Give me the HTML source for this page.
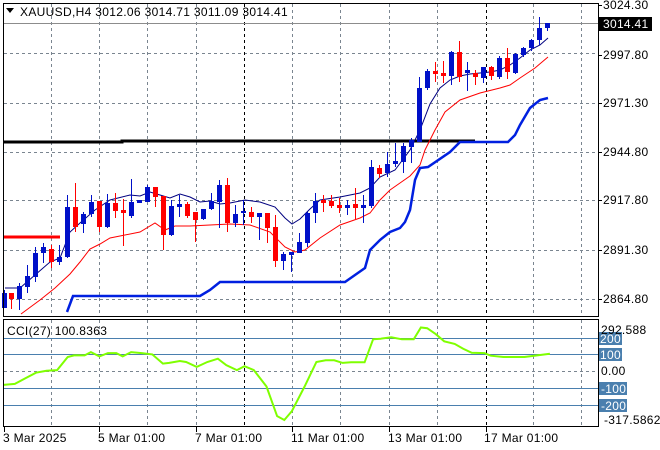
<!DOCTYPE html>
<html><head><meta charset="utf-8"><style>
html,body{margin:0;padding:0;background:#fff;width:660px;height:450px;overflow:hidden}
svg{display:block;font-family:"Liberation Sans",sans-serif;font-size:12px;letter-spacing:0.3px}
</style></head><body>
<svg width="660" height="450" viewBox="0 0 660 450" xmlns="http://www.w3.org/2000/svg">
<rect width="660" height="450" fill="#fff"/>
<g stroke="#7a8590" stroke-width="1" stroke-dasharray="3,3" fill="none">
<path d="M51.5 4V316M99.5 4V316M147.5 4V316M196.5 4V316M292.5 4V316M340.5 4V316M389.5 4V316M437.5 4V316M533.5 4V316M581.5 4V316"/>
<path d="M4 53.5H598M4 103.5H598M4 152.5H598M4 200.5H598M4 250.5H598M4 299.5H598"/>
<path d="M51.5 320V426M99.5 320V426M147.5 320V426M196.5 320V426M292.5 320V426M340.5 320V426M389.5 320V426M437.5 320V426M533.5 320V426M581.5 320V426M4 371.5H598"/>
</g>
<g stroke="#000" stroke-dasharray="3,3"><path d="M244.5 4V316M486.5 4V316M244.5 320V426M486.5 320V426"/></g>
<path d="M4 23.5H598" stroke="#8c8c8c"/>
<g stroke="#4a7fae"><path d="M4 338.5H598M4 354.5H598M4 388.5H598M4 405.5H598"/></g>
<path d="M3 142H122V141H475" stroke="#000" stroke-width="3" fill="none"/>
<path d="M3 237H60" stroke="#f00" stroke-width="3"/>
<polyline fill="none" stroke="#0020e0" stroke-width="2.5" points="67,312 73,296 100,296 200,296 210,290 220,282 345,282 355,275 365,268 370,250 380,240 390,232 400,228 405,222 410,210 415,180 420,168 428,167 450,152 460,142 508,142 515,135 520,125 530,108 540,100 548,98"/>
<polyline fill="none" stroke="#f00" stroke-width="1" points="21,314 40,300 55,288 70,274 80,262 90,249 100,244 110,238 120,236 140,232 155,223 165,230 175,226 190,226 210,225 230,224 250,225 270,232 285,247 295,252 305,250 320,238 340,225 360,218 370,213 380,200 390,190 400,183 410,176 420,165 425,150 435,130 445,112 460,100 480,93 500,88 510,85 520,78 535,68 548,57"/>
<polyline fill="none" stroke="#000080" stroke-width="1" points="5,288 20,288 35,275 50,262 60,258 70,232 80,223 95,210 110,200 130,195 140,196 150,192 160,195 170,198 180,194 190,197 200,202 210,201 220,204 230,203 245,200 260,202 275,207 285,218 292,224 300,219 310,209 320,200 340,197 360,193 370,188 380,177 395,170 410,150 420,130 430,104 440,88 450,80 460,76 470,74 480,73 490,72 500,70 510,65 520,58 530,50 540,45 548,38"/>
<g stroke="#0010c8" fill="none">
<path stroke-width="1" d="M4.5 290V308M19.5 283V310M27.5 265V293M35.5 247V282M43.5 243V263M59.5 245V265M67.5 195V258M83.5 212V233M91.5 195V217M107.5 194V228M131.5 179V218M139.5 200V203M147.5 185V202M171.5 200V236M179.5 195V217M203.5 209V220M211.5 193V210M219.5 180V228M235.5 205V227M243.5 200V225M259.5 213V240M283.5 252V270M291.5 252V272M299.5 233V253M307.5 212V247M315.5 193V223M347.5 200V215M363.5 195V223M371.5 160V208M387.5 152V177M395.5 143V167M403.5 143V173M411.5 138V163M419.5 77V142M427.5 69V90M451.5 51V85M467.5 62V91M483.5 67V83M499.5 56V79M515.5 53V74M523.5 47V57M531.5 39V51M539.5 17V45M547.5 23V31"/>
<path stroke-width="5" d="M4.5 293V308M19.5 286V299M27.5 276V287M35.5 253V277M43.5 247V253M59.5 257V262M67.5 207V257M83.5 214V224M91.5 202V214M107.5 203V227M131.5 202V216M139.5 200V203M147.5 187V202M171.5 206V235M179.5 204V207M203.5 209V219M211.5 201V209M219.5 185V202M235.5 214V223M243.5 211V213M259.5 213V217M283.5 254V261M291.5 252V255M299.5 242V253M307.5 213V243M315.5 201V213M347.5 205V208M363.5 205V208M371.5 167V206M387.5 164V173M395.5 161V164M403.5 146V162M411.5 140V147M419.5 88V142M427.5 71V88M451.5 52V76M467.5 70V73M483.5 67V78M499.5 58V77M515.5 54V73M523.5 48V55M531.5 40V48M539.5 28V40M547.5 23V28"/>
</g>
<g stroke="#f00" fill="none">
<path stroke-width="1" d="M11.5 293V309M51.5 245V268M75.5 183V232M99.5 201V232M115.5 193V218M123.5 199V246M155.5 187V207M163.5 196V250M187.5 202V218M195.5 212V242M227.5 178V232M251.5 207V223M267.5 213V243M275.5 215V267M323.5 195V212M331.5 195V208M339.5 198V213M355.5 188V219M379.5 165V178M435.5 62V82M443.5 61V83M459.5 41V82M475.5 70V85M491.5 66V80M507.5 48V79"/>
<path stroke-width="5" d="M11.5 293V299M51.5 249V262M75.5 207V227M99.5 201V227M115.5 203V211M123.5 210V213M155.5 187V197M163.5 196V235M187.5 204V216M195.5 212V220M227.5 185V223M251.5 212V217M267.5 213V228M275.5 227V261M323.5 200V203M331.5 201V206M339.5 205V208M355.5 204V208M379.5 168V174M435.5 71V74M443.5 73V76M459.5 52V77M475.5 73V77M491.5 67V76M507.5 58V72"/>
</g>
<polyline fill="none" stroke="#7fff00" stroke-width="2" points="3.4,384.9 14.8,383.9 25.4,378.3 36,372.7 46.5,370.8 57.1,370.1 67.7,357 74,355.4 84.6,355.4 90.9,352.1 99.4,356.4 107.9,353.1 116.3,353.1 122.7,356.4 131.1,352.1 141.7,353.1 152.3,354.4 162.9,363.6 169.2,362.9 179.8,361 186.1,362 196.7,366.9 207.3,362 217.9,358.7 226.3,365.2 236.9,370.1 244.5,366.2 253.8,370.1 266.5,386.5 277.1,416.1 284.3,420 291.9,411.1 304.6,386.5 316.4,362 325.7,360.3 334.2,360.3 342.6,362.9 351.1,362.3 364.6,362.3 373.1,339.3 380.7,338.7 391.3,337.3 401.9,339.3 413.7,339.3 420.9,327.5 427.2,328.2 435.7,334.1 444.2,341.3 454.7,343.9 463.2,348.8 471.7,352.8 484.4,353.1 490.7,355.7 503.4,357 524.5,357 537.2,355.4 549.9,353.7"/>
<g fill="none" stroke="#000"><rect x="3.5" y="3.5" width="595" height="313"/><rect x="3.5" y="319.5" width="595" height="107"/></g>
<g stroke="#000"><path d="M598 5.5h4M598 55.5h4M598 103.5h4M598 152.5h4M598 200.5h4M598 250.5h4M598 299.5h4M4.5 427v5M99.5 427v5M196.5 427v5M292.5 427v5M389.5 427v5M486.5 427v5"/></g>
<path d="M6 8h8l-4 5z" fill="#000"/>
<text x="20" y="16" fill="#000" textLength="268" lengthAdjust="spacing">XAUUSD,H4  3012.06 3014.71 3011.09 3014.41</text>
<g fill="#000">
<text x="603" y="9">3024.30</text>
<text x="603" y="59">2997.80</text>
<text x="603" y="107">2971.30</text>
<text x="603" y="156">2944.80</text>
<text x="603" y="204">2917.80</text>
<text x="603" y="254">2891.30</text>
<text x="603" y="303">2864.80</text>
</g>
<rect x="599" y="17" width="53" height="14" fill="#000"/>
<text x="603" y="28" fill="#fff">3014.41</text>
<text x="7" y="335" fill="#000">CCI(27) 100.8363</text>
<g fill="#4a7fae"><rect x="599" y="332" width="23" height="13"/><rect x="599" y="348" width="23" height="13"/><rect x="599" y="382" width="28" height="13"/><rect x="599" y="399" width="28" height="13"/></g>
<g fill="#fff"><text x="600" y="343">200</text><text x="600" y="359">100</text><text x="601" y="393">-100</text><text x="601" y="410">-200</text></g>
<g fill="#000"><text x="601" y="334">292.588</text><text x="601" y="375">0.00</text><text x="604" y="424">-317.5862</text></g>
<g fill="#000">
<text x="3" y="442">3 Mar 2025</text>
<text x="98" y="442">5 Mar 01:00</text>
<text x="195" y="442">7 Mar 01:00</text>
<text x="291" y="442">11 Mar 01:00</text>
<text x="388" y="442">13 Mar 01:00</text>
<text x="484" y="442">17 Mar 01:00</text>
</g>
</svg>
</body></html>
